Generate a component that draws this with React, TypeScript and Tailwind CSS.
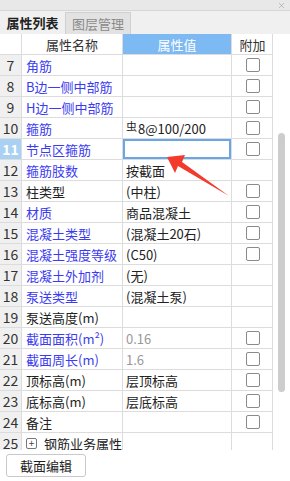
import { X } from "lucide-react";

type Row = {
  no: number;
  name: string;
  value?: string;
  blue?: boolean;
  grey?: boolean;
  check?: boolean;
  steel?: boolean;
  focused?: boolean;
  group?: boolean;
};

const rows: Row[] = [
  { no: 7, name: "角筋", blue: true, check: true },
  { no: 8, name: "B边一侧中部筋", blue: true, check: true },
  { no: 9, name: "H边一侧中部筋", blue: true, check: true },
  { no: 10, name: "箍筋", value: "8@100/200", steel: true, blue: true, check: true },
  { no: 11, name: "节点区箍筋", blue: true, check: true, focused: true },
  { no: 12, name: "箍筋肢数", value: "按截面", blue: true },
  { no: 13, name: "柱类型", value: "(中柱)", check: true },
  { no: 14, name: "材质", value: "商品混凝土", blue: true, check: true },
  { no: 15, name: "混凝土类型", value: "(混凝土20石)", blue: true, check: true },
  { no: 16, name: "混凝土强度等级", value: "(C50)", blue: true, check: true },
  { no: 17, name: "混凝土外加剂", value: "(无)", blue: true },
  { no: 18, name: "泵送类型", value: "(混凝土泵)", blue: true },
  { no: 19, name: "泵送高度(m)" },
  { no: 20, name: "截面面积(m²)", value: "0.16", blue: true, grey: true, check: true },
  { no: 21, name: "截面周长(m)", value: "1.6", blue: true, grey: true, check: true },
  { no: 22, name: "顶标高(m)", value: "层顶标高", check: true },
  { no: 23, name: "底标高(m)", value: "层底标高", check: true },
  { no: 24, name: "备注", check: true },
  { no: 25, name: "钢筋业务属性", group: true },
];

function Checkbox() {
  return <div className="w-[14px] h-[14px] rounded-[2px] border border-[#8a8a8a] bg-white" />;
}

function TableRow({ row }: { row: Row }) {
  return (
    <div className="grid grid-cols-[22px_101px_109px_41px] h-[21px] shrink-0 border-b border-[#dcdcdc]">
      <div
        className={`flex items-center justify-center border-r border-[#dcdcdc] text-[14px] ${
          row.focused ? "bg-[#a9d1f3] text-white font-bold" : "bg-[#f0f0f0] text-[#333]"
        }`}
      >
        {row.no}
      </div>
      <div
        className={`flex items-center gap-[7px] pl-[4px] border-r border-[#dcdcdc] whitespace-nowrap overflow-hidden ${
          row.blue ? "text-[#3b3bf0]" : "text-[#222]"
        }`}
      >
        {row.group && (
          <span className="w-[11px] h-[11px] border border-[#777] rounded-[2px] flex items-center justify-center text-[10px] leading-none text-[#444]">
            +
          </span>
        )}
        {row.name}
      </div>
      <div className="relative flex items-center pl-[3px] border-r border-[#dcdcdc] whitespace-nowrap overflow-hidden">
        {row.focused && <div className="absolute inset-[0px] border-2 border-[#6aa5e6]" />}
        {row.steel && <span className="text-[11px] mr-[1px] -mt-[4px] text-[#222]">虫</span>}
        <span className={row.grey ? "text-[#999]" : "text-[#222]"}>{row.value}</span>
      </div>
      <div className="flex items-center justify-center">{row.check && <Checkbox />}</div>
    </div>
  );
}

export default function App() {
  return (
    <div
      className="w-[290px] h-[481px] bg-white flex flex-col overflow-hidden relative text-[13px] leading-none"
      style={{ fontFamily: '"Noto Sans CJK SC", "Noto Sans", sans-serif' }}
    >
      <div className="h-[11px] shrink-0 bg-[#e8e8e8] border-b border-[#d6d6d6] flex justify-end items-center pr-[4px]">
        <X className="w-[9px] h-[9px] text-[#999]" strokeWidth={1.5} />
      </div>
      <div className="h-[23px] shrink-0 bg-[#f0f0f0] flex items-stretch">
        <div className="w-[65px] flex items-center justify-center text-[#222] font-bold">属性列表</div>
        <div className="w-[66px] mt-[1px] flex items-center justify-center text-[#8a8a8a] bg-[#e2e2e2] border border-b-0 border-[#d0d0d0]">
          图层管理
        </div>
      </div>
      <div className="flex h-[416px] shrink-0">
        <div className="w-[273px] flex flex-col overflow-hidden border-r border-[#dcdcdc]">
          <div className="grid grid-cols-[22px_101px_109px_41px] h-[21px] shrink-0 border-b border-[#dcdcdc]">
            <div className="border-r border-[#dcdcdc]" />
            <div className="flex items-center justify-center border-r border-[#dcdcdc] text-[#333]">属性名称</div>
            <div className="flex items-center justify-center bg-[#7db9f3] text-white border-r border-[#dcdcdc]">属性值</div>
            <div className="flex items-center justify-center text-[#333]">附加</div>
          </div>
          {rows.map((row) => (
            <TableRow key={row.no} row={row} />
          ))}
        </div>
        <div className="flex-1 flex justify-center pt-[99px]">
          <div className="w-[7px] h-[259px] rounded-full bg-[#cdcdcd]" />
        </div>
      </div>
      <div className="flex-1 flex items-center px-[6px]">
        <button className="w-[80px] h-[23px] border border-[#c9c9c9] rounded-[3px] bg-white text-[#222] text-[13px]">
          截面编辑
        </button>
      </div>
      <svg className="absolute left-0 top-0 pointer-events-none" width="290" height="481">
        <polygon points="167,157 185,155 182,162 229,196 178,166 175,173" fill="#f23b2c" />
      </svg>
    </div>
  );
}
